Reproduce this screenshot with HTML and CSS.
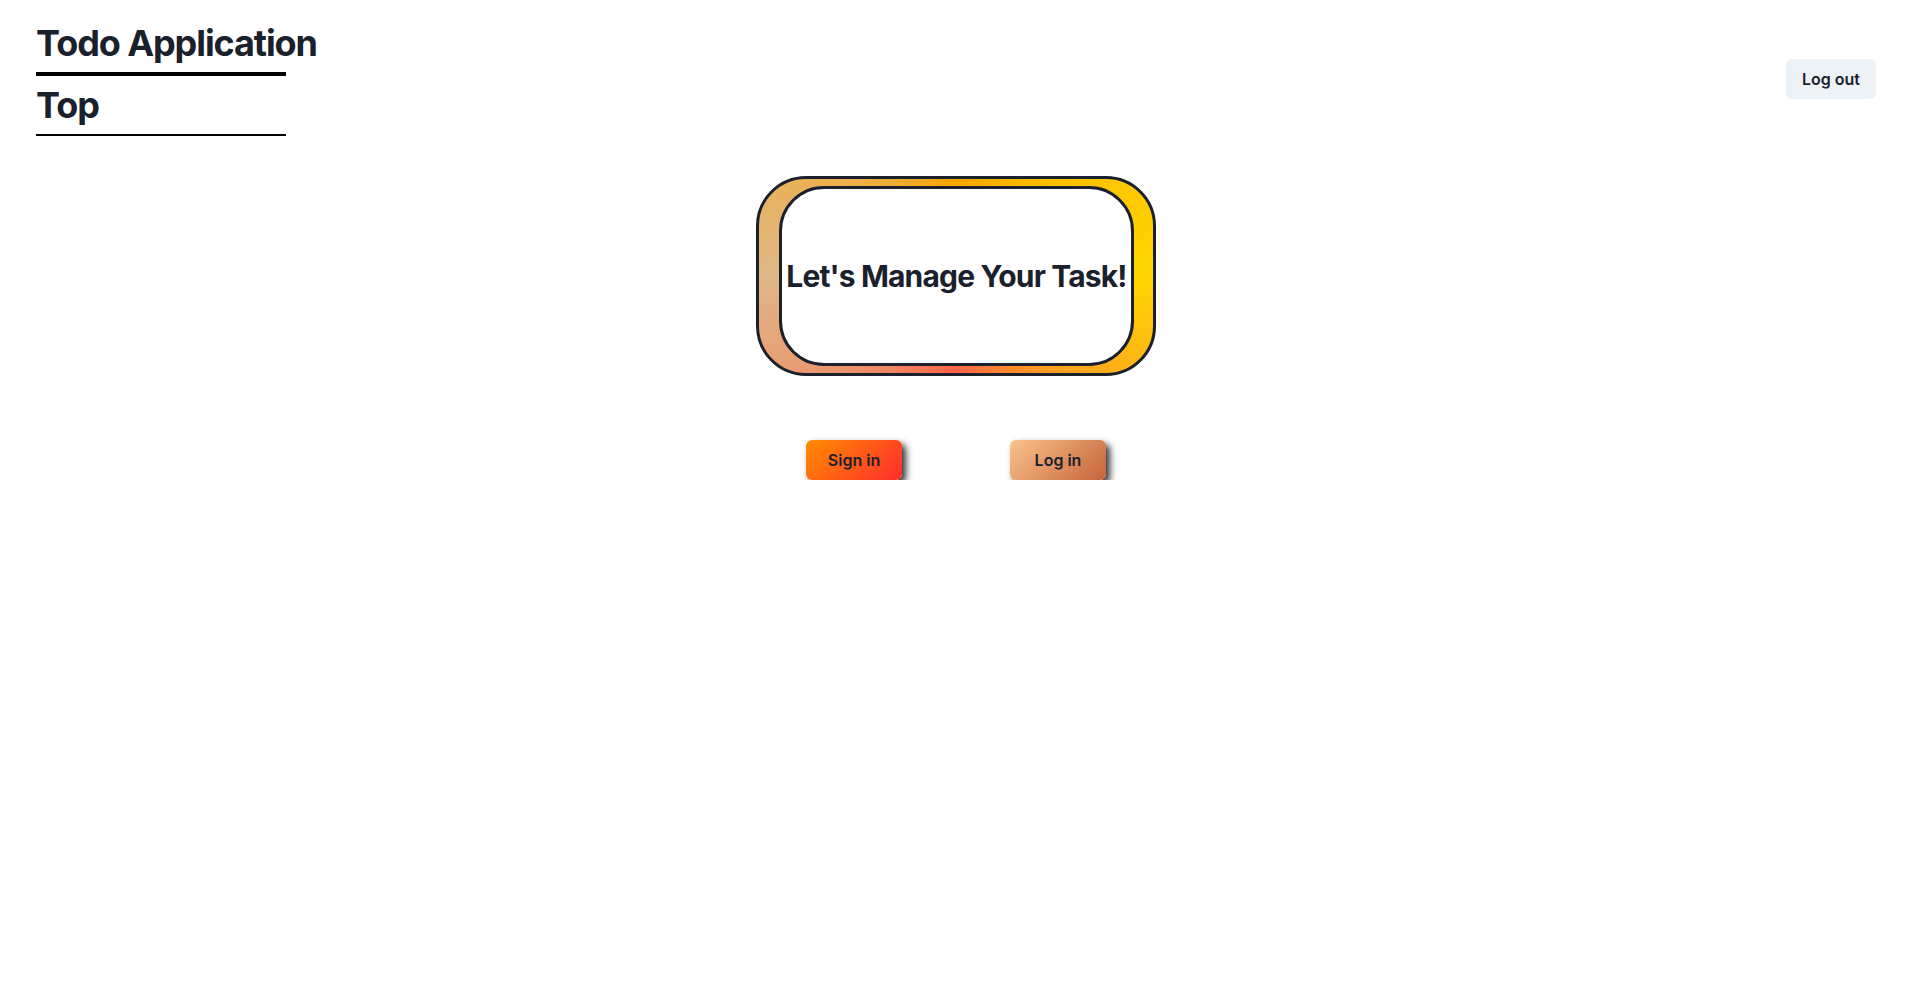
FILE: index.html
```html
<!DOCTYPE html>
<html lang="en">
<head>
<meta charset="utf-8">
<title>Todo Application</title>
<link rel="stylesheet" href="styles.css">
</head>
<body>
<header class="header">
  <div class="brand">
    <h1 class="title">Todo Application</h1>
    <div class="rule rule-thick"></div>
    <h2 class="title">Top</h2>
    <div class="rule rule-thin"></div>
  </div>
  <button class="btn btn-gray">Log out</button>
</header>
<main class="main">
  <div class="card">
    <div class="card-inner">
      <p class="card-text">Let's Manage Your Task!</p>
    </div>
  </div>
  <div class="actions">
    <button class="btn btn-sign">Sign in</button>
    <button class="btn btn-log">Log in</button>
  </div>
</main>
</body>
</html>
```

FILE: styles.css
```css
* { box-sizing: border-box; }
html, body { margin: 0; padding: 0; background: #fff; }
body {
  font-family: Inter, "Noto Sans", "Liberation Sans", sans-serif;
  color: #1A202C;
}
.header {
  display: flex;
  justify-content: space-between;
  align-items: center;
  padding: 22px 30px 0 36px;
}
.brand { display: flex; flex-direction: column; }
.title {
  margin: 0;
  font-size: 36px;
  line-height: 1.2;
  font-weight: 700;
  letter-spacing: -0.03em;
  color: #1A202C;
}
.rule { width: 250px; background: #000; }
.rule-thick { height: 4px; margin: 7px 0 8px; }
.rule-thin { height: 2px; margin: 7px 0 0; }
.btn {
  font-family: Inter, "Noto Sans", "Liberation Sans", sans-serif;
  font-size: 16px;
  font-weight: 600;
  color: #1A202C;
  height: 40px;
  padding: 0 16px;
  border: none;
  border-radius: 6px;
  cursor: pointer;
  line-height: 1.2;
}
.btn-gray { background: #EDF2F7; }
.main {
  display: flex;
  flex-direction: column;
  align-items: center;
  padding: 40px 30px 0 36px;
}
.card {
  width: 400px;
  height: 200px;
  border: 3px solid #1A202C;
  border-radius: 50px;
  padding: 7px 19px 7px 20px;
  background: conic-gradient(orange, gold, tomato, burlywood, orange);
}
.card-inner {
  height: 100%;
  background: #fff;
  border: 3px solid #1A202C;
  border-radius: 45px;
  display: flex;
  align-items: center;
  justify-content: center;
}
.card-text {
  margin: 0;
  font-size: 30px;
  font-weight: 700;
  line-height: 1.2;
  letter-spacing: -0.028em;
  white-space: nowrap;
}
.actions {
  display: flex;
  gap: 108px;
  margin-top: 64px;
}
.btn-sign, .btn-log {
  width: 96px;
  box-shadow: 4px 4px 7px rgba(0, 0, 0, 0.8);
}
.btn-sign { background: linear-gradient(135deg, #FF8C00, #FF2D2D); }
.btn-log { background: linear-gradient(135deg, #F9C38C, #C6643A); }
```
